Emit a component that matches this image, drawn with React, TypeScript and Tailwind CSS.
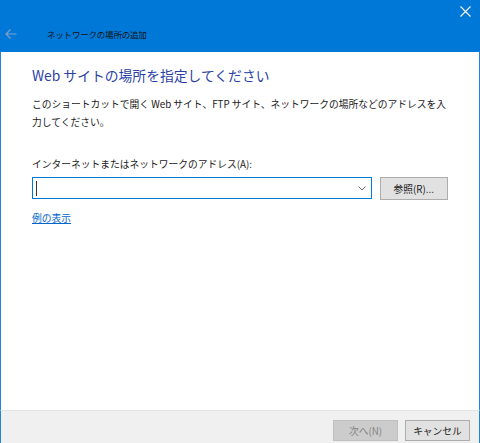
export default function App() {
  return (
    <div className="w-[480px] h-[443px] flex flex-col bg-[#0078d7] font-['Noto_Sans_CJK_JP','Noto_Sans',sans-serif] text-[#1a1a1a] overflow-hidden">
      {/* title bar */}
      <div className="h-[52px] flex flex-col shrink-0">
        <div className="h-[22px] flex justify-end items-center pr-[9px]">
          <svg width="11" height="11" viewBox="0 0 11 11" className="mt-[1px]">
            <path d="M0.5 0.5 L10.5 10.5 M10.5 0.5 L0.5 10.5" stroke="#ffffff" strokeWidth="1.1" />
          </svg>
        </div>
        <div className="h-[24px] flex items-center">
          <svg width="12" height="10" viewBox="0 0 12 10" className="ml-[5px]">
            <path d="M5.5 0.5 L1 5 L5.5 9.5 M1 5 L11.5 5" stroke="#7f9fc9" strokeWidth="1.2" fill="none" />
          </svg>
          <span className="ml-[30px] text-[8.5px] leading-[16px] tracking-[-0.2px] text-[#141414]">ネットワークの場所の追加</span>
        </div>
      </div>

      {/* body */}
      <div className="flex-1 bg-white border-x border-[#1e86dc] flex flex-col px-[31px] pt-[13px]">
        <h1 className="text-[13.8px] leading-[20px] text-[#2a3fa6] font-normal whitespace-nowrap">Web サイトの場所を指定してください</h1>
        <p className="mt-[10px] text-[9.75px] leading-[18px] whitespace-nowrap">
          このショートカットで開く Web サイト、FTP サイト、ネットワークの場所などのアドレスを入
          <br />
          力してください。
        </p>
        <div className="mt-[24px] text-[9.75px] leading-[18px] whitespace-nowrap">インターネットまたはネットワークのアドレス(A):</div>
        <div className="mt-[4px] flex items-start">
          <div className="w-[342px] h-[22px] border border-[#0078d7] flex items-center justify-between pl-[3px] pr-[5px]">
            <div className="w-[1px] h-[15px] bg-[#333333]" />
            <svg width="8" height="5" viewBox="0 0 8 5">
              <path d="M0.5 0.5 L4 4 L7.5 0.5" stroke="#6b6b6b" strokeWidth="1" fill="none" />
            </svg>
          </div>
          <button className="ml-[8px] w-[69px] h-[23px] bg-[#e1e1e1] border border-[#adadad] text-[9.75px] leading-[16px] text-[#1a1a1a]">
            参照(R)...
          </button>
        </div>
        <a className="mt-[9px] self-start text-[9.75px] leading-[18px] text-[#0066cc] underline">例の表示</a>
      </div>

      {/* footer */}
      <div className="h-[33px] shrink-0 bg-[#f0f0f0] border-t border-[#e3e3e3] border-x border-x-[#1e86dc] flex justify-end items-start pt-[9px] pr-[9px] gap-[7px]">
        <button className="w-[65px] h-[21px] bg-[#cccccc] border border-[#bfbfbf] text-[9.75px] leading-[16px] text-[#838383]">
          次へ(N)
        </button>
        <button className="w-[65px] h-[21px] bg-[#e1e1e1] border border-[#adadad] text-[9.75px] leading-[16px] text-[#1a1a1a]">
          キャンセル
        </button>
      </div>
    </div>
  );
}
